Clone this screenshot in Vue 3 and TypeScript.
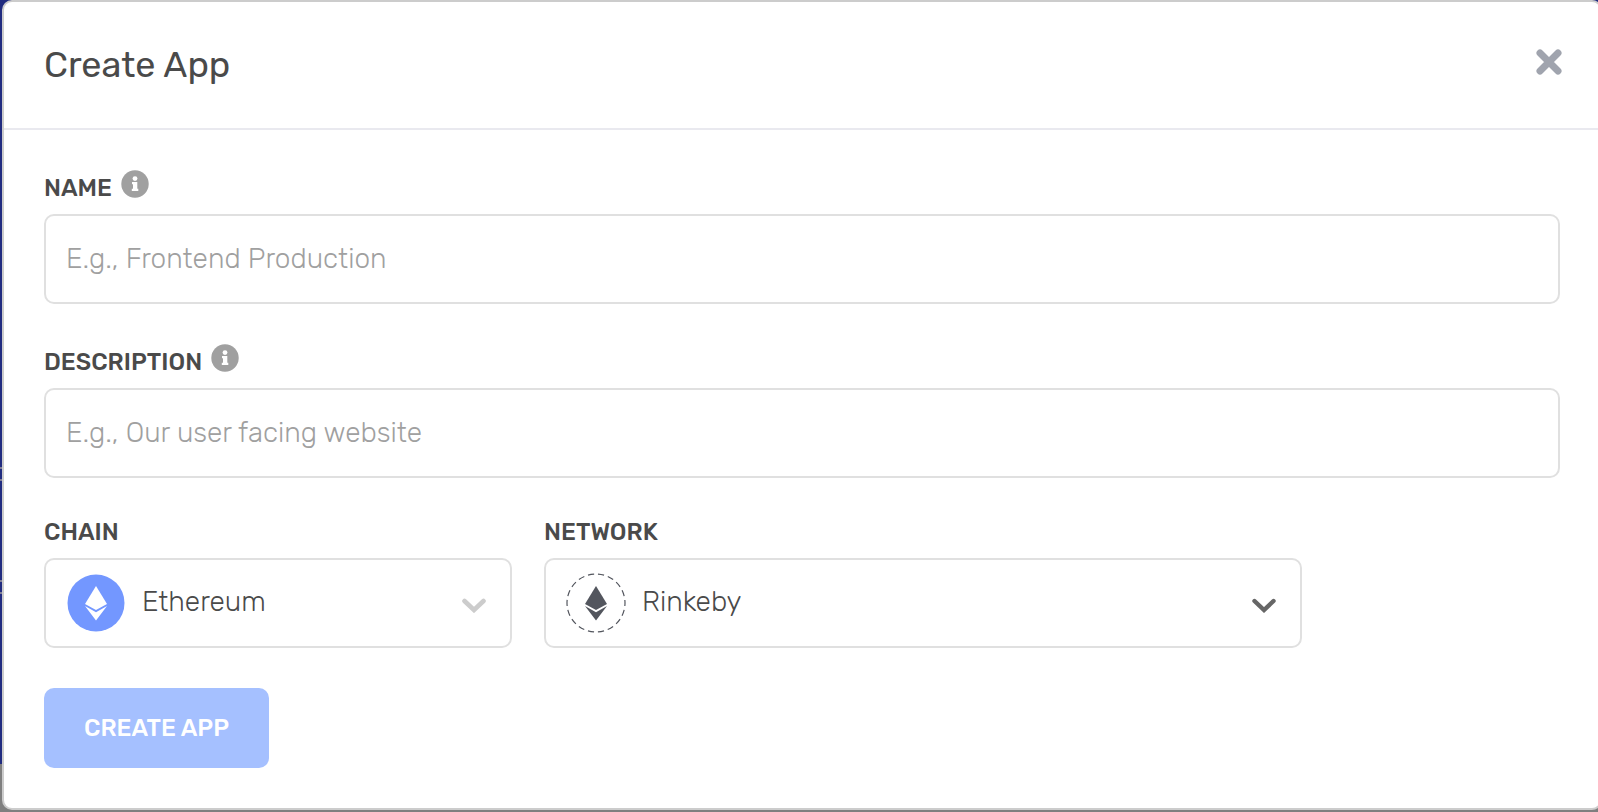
<script setup lang="ts">
import { ref } from 'vue'

const name = ref('')
const description = ref('')
const chain = ref('Ethereum')
const network = ref('Rinkeby')
</script>

<template>
  <div class="backdrop">
    <main class="dialog" role="dialog" aria-labelledby="dialog-title">
      <header class="header">
        <h1 id="dialog-title">Create App</h1>
        <button class="close" type="button" aria-label="Close">
          <svg viewBox="0 0 26 26" width="26" height="26" aria-hidden="true">
            <path d="M4 4L22 22M22 4L4 22" fill="none" stroke="#a0a4ae" stroke-width="7" stroke-linecap="round" />
          </svg>
        </button>
      </header>

      <form class="form" @submit.prevent>
        <div class="field">
          <div class="label-row">
            <label for="app-name">NAME</label>
            <svg class="info" viewBox="0 0 28 28" width="28" height="28" aria-hidden="true">
              <circle cx="14" cy="14" r="13.7" fill="#a0a0a0" />
              <circle cx="14" cy="8.6" r="2.4" fill="#fff" />
              <path d="M11 12h5.3v6.7h1v2.2h-6.5v-2.2h1.2v-4.4h-1V12z" fill="#fff" />
            </svg>
          </div>
          <input id="app-name" v-model="name" type="text" placeholder="E.g., Frontend Production" />
        </div>

        <div class="field">
          <div class="label-row">
            <label for="app-description">DESCRIPTION</label>
            <svg class="info" viewBox="0 0 28 28" width="28" height="28" aria-hidden="true">
              <circle cx="14" cy="14" r="13.7" fill="#a0a0a0" />
              <circle cx="14" cy="8.6" r="2.4" fill="#fff" />
              <path d="M11 12h5.3v6.7h1v2.2h-6.5v-2.2h1.2v-4.4h-1V12z" fill="#fff" />
            </svg>
          </div>
          <input id="app-description" v-model="description" type="text" placeholder="E.g., Our user facing website" />
        </div>

        <div class="selects">
          <div class="field chain">
            <div class="label-row short"><label for="chain">CHAIN</label></div>
            <div class="select-box">
              <select id="chain" v-model="chain" disabled>
                <option>Ethereum</option>
              </select>
              <svg class="token" viewBox="0 0 60 60" width="60" height="60" aria-hidden="true">
                <circle cx="30" cy="30" r="28.5" fill="#7397ff" />
                <path d="M30 13L41 31L30 37L19 31z" fill="#fff" />
                <path d="M19 33L30 39.2L41 33L30 47.5z" fill="#fff" />
              </svg>
              <svg class="chevron" viewBox="0 0 24 16" width="24" height="16" aria-hidden="true">
                <path d="M2.5 4L12 13L21.5 4" fill="none" stroke="#cccccc" stroke-width="4.6" stroke-linecap="round" />
              </svg>
            </div>
          </div>

          <div class="field network">
            <div class="label-row short"><label for="network">NETWORK</label></div>
            <div class="select-box">
              <select id="network" v-model="network">
                <option>Rinkeby</option>
              </select>
              <svg class="token" viewBox="0 0 60 60" width="60" height="60" aria-hidden="true">
                <circle cx="30" cy="30" r="29" fill="none" stroke="#53565e" stroke-width="1.2" stroke-dasharray="6.2 3.91" stroke-dashoffset="3.1" />
                <path d="M30 13L41 31L30 37L19 31z" fill="#53565e" />
                <path d="M19 33L30 39.2L41 33L30 47.5z" fill="#53565e" />
              </svg>
              <svg class="chevron" viewBox="0 0 24 16" width="24" height="16" aria-hidden="true">
                <path d="M2.5 4L12 13L21.5 4" fill="none" stroke="#666666" stroke-width="4.4" stroke-linecap="round" />
              </svg>
            </div>
          </div>
        </div>

        <button class="submit" type="submit" disabled>CREATE APP</button>
      </form>
    </main>
  </div>
</template>

<style>
body {
  margin: 0;
}
</style>

<style scoped>
* {
  box-sizing: border-box;
}

.backdrop {
  --navy: #212c80;
  --rule: #7f7f98;
  min-height: 100vh;
  padding: 0 0 2px 2px;
  overflow: hidden;
  background: linear-gradient(
    var(--navy) 467px,
    var(--rule) 467px 469px,
    var(--navy) 469px 479px,
    var(--rule) 479px 481px,
    var(--navy) 481px 580px,
    var(--rule) 580px 582px,
    var(--navy) 582px 592px,
    var(--rule) 592px 594px,
    var(--navy) 594px 764px,
    #7f7f7f 764px
  );
  color: #4a4a4a;
  font-family: Rubik, Roboto, sans-serif;
}

.dialog {
  margin-right: -4px;
  background: #fff;
  border: 2px solid #ccc;
  border-radius: 10px;
}

.header {
  display: flex;
  align-items: flex-start;
  justify-content: space-between;
  padding: 40px 38px 40px 40px;
  border-bottom: 2px solid #e9e9ef;
}

h1 {
  margin: 0;
  font-size: 36px;
  font-weight: 400;
  line-height: 46px;
}

.close {
  display: flex;
  padding: 7px 0;
  border: 0;
  background: none;
}

.form {
  padding: 40px;
}

.field {
  margin-bottom: 40px;
}

.label-row {
  display: flex;
  gap: 9px;
  height: 44px;
}

.label-row.short {
  height: 40px;
}

label {
  font-size: 24px;
  font-weight: 500;
  line-height: 36px;
}

.short label {
  line-height: 28px;
}

input,
select {
  display: block;
  width: 100%;
  height: 90px;
  border: 2px solid #e0e0e0;
  border-radius: 10px;
  background: #fff;
  color: #4a4a4a;
  font-family: inherit;
  font-size: 28px;
  font-weight: 300;
  opacity: 1;
}

input {
  padding: 0 20px 2px;
}

input::placeholder {
  color: #a0a0a0;
  opacity: 1;
}

select {
  appearance: none;
  padding: 0 60px 4px 96px;
}

.selects {
  display: flex;
  gap: 32px;
}

.chain {
  flex: 0 1 468px;
}

.network {
  flex: 0 0 50%;
}

.select-box {
  position: relative;
}

.token {
  position: absolute;
  top: 15px;
  left: 22px;
  pointer-events: none;
}

.chevron {
  position: absolute;
  top: 39px;
  right: 26px;
  pointer-events: none;
}

.submit {
  display: block;
  height: 80px;
  padding: 0 40px;
  border: 0;
  border-radius: 10px;
  background: #a5c0ff;
  color: #fff;
  font-family: inherit;
  font-size: 24px;
  font-weight: 500;
}
</style>
